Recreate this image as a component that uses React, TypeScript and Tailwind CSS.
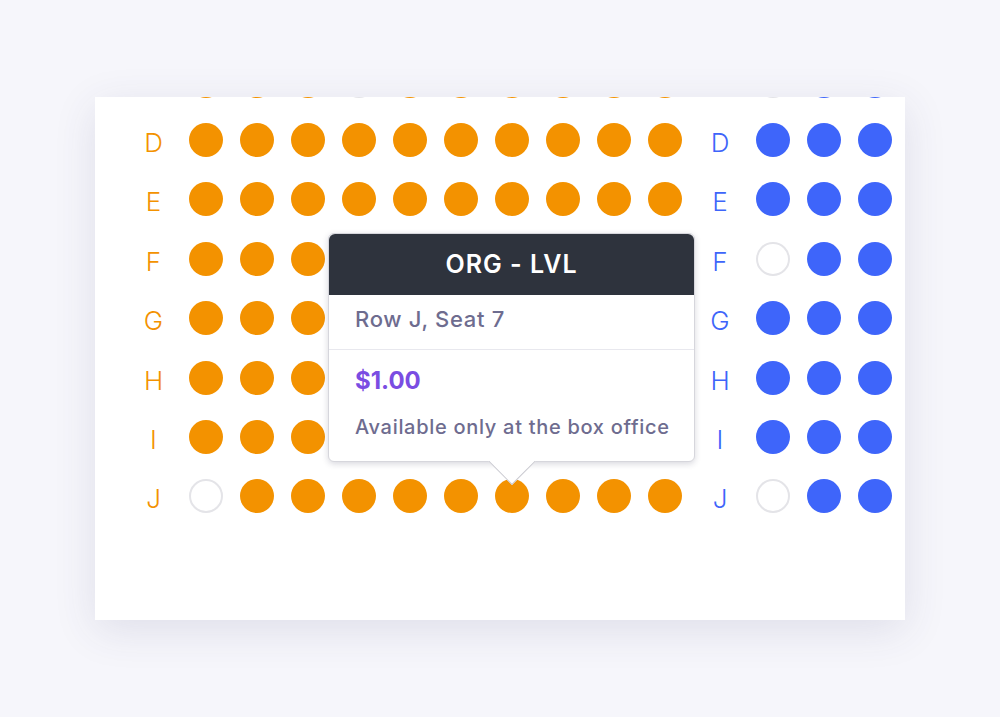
import React from 'react';

type Row = { label: string; left: boolean[]; right: boolean[] };

// true = filled seat, false = empty outline
const full = (n: number) => Array.from({ length: n }, () => true);
const withEmpty = (n: number, empty: number[]) =>
  Array.from({ length: n }, (_, i) => !empty.includes(i));

const rows: Row[] = [
  { label: '', left: withEmpty(10, [3]), right: withEmpty(3, [0]) },
  { label: 'D', left: full(10), right: full(3) },
  { label: 'E', left: full(10), right: full(3) },
  { label: 'F', left: full(10), right: withEmpty(3, [0]) },
  { label: 'G', left: full(10), right: full(3) },
  { label: 'H', left: full(10), right: full(3) },
  { label: 'I', left: full(10), right: full(3) },
  { label: 'J', left: withEmpty(10, [0]), right: withEmpty(3, [0]) },
];

const Seat = ({ filled, color }: { filled: boolean; color: 'orange' | 'blue' }) => (
  <div className="w-[51px] flex items-center justify-center">
    {filled ? (
      <div
        className={`w-[34px] h-[34px] rounded-full ${
          color === 'orange' ? 'bg-[#f39200]' : 'bg-[#3e65fa]'
        }`}
      />
    ) : (
      <div className="w-[34px] h-[34px] rounded-full border-2 border-[#e4e4e8] bg-white" />
    )}
  </div>
);

const Tooltip = () => (
  <div className="absolute left-[233px] top-[136px] w-[367px] z-10">
    <div className="rounded-[6px] border border-[#d6d6dc] bg-white shadow-[0_2px_6px_rgba(40,40,70,0.18)]">
      <div className="h-[61px] rounded-t-[6px] bg-[#2e333d] flex items-center justify-center">
        <span className="text-white text-[25px] font-semibold tracking-[1px]">ORG - LVL</span>
      </div>
      <div className="h-[55px] flex items-center pl-[26px] pb-[6px] border-b border-[#e8e8ee]">
        <span className="text-[#6e6c8f] text-[22px] font-medium tracking-[0.7px]">Row J, Seat 7</span>
      </div>
      <div className="h-[111px] flex flex-col pl-[26px] pt-[14px]">
        <span className="text-[#7a4de2] text-[24px] font-bold leading-[34px]">$1.00</span>
        <span className="text-[#6e6c8f] text-[20px] font-medium tracking-[0.7px] leading-[28px] mt-[15px]">
          Available only at the box office
        </span>
      </div>
    </div>
    {/* pointer */}
    <div className="absolute left-[160px] top-[calc(100%-1px)] w-[48px] h-[25px] overflow-hidden">
      <div className="absolute left-[7px] top-[-17px] w-[34px] h-[34px] rotate-45 bg-white border-r border-b border-[#c9c9d0]" />
    </div>
  </div>
);

export default function App() {
  return (
    <div
      className="w-[1000px] h-[717px] bg-[#f6f6fb] pt-[97px] pl-[95px]"
      style={{ fontFamily: 'Inter, "Noto Sans", sans-serif' }}
    >
      <div className="relative w-[810px] h-[523px] bg-white overflow-hidden shadow-[0_10px_40px_rgba(60,60,110,0.12)]">
        <div className="flex flex-col mt-[-46px] pl-[34px]">
          {rows.map((row, r) => (
            <div key={r} className="h-[59.4px] flex items-center">
              <div className="w-[51px] pt-[5px] pr-[2px] text-center text-[#f39200] text-[26px] font-light">
                {row.label}
              </div>
              {row.left.map((s, i) => (
                <Seat key={i} filled={s} color="orange" />
              ))}
              <div className="w-[54px] ml-[3px] pt-[5px] text-center text-[#3e65fa] text-[26px] font-light">
                {row.label}
              </div>
              {row.right.map((s, i) => (
                <Seat key={i} filled={s} color="blue" />
              ))}
            </div>
          ))}
        </div>
        <Tooltip />
      </div>
    </div>
  );
}
